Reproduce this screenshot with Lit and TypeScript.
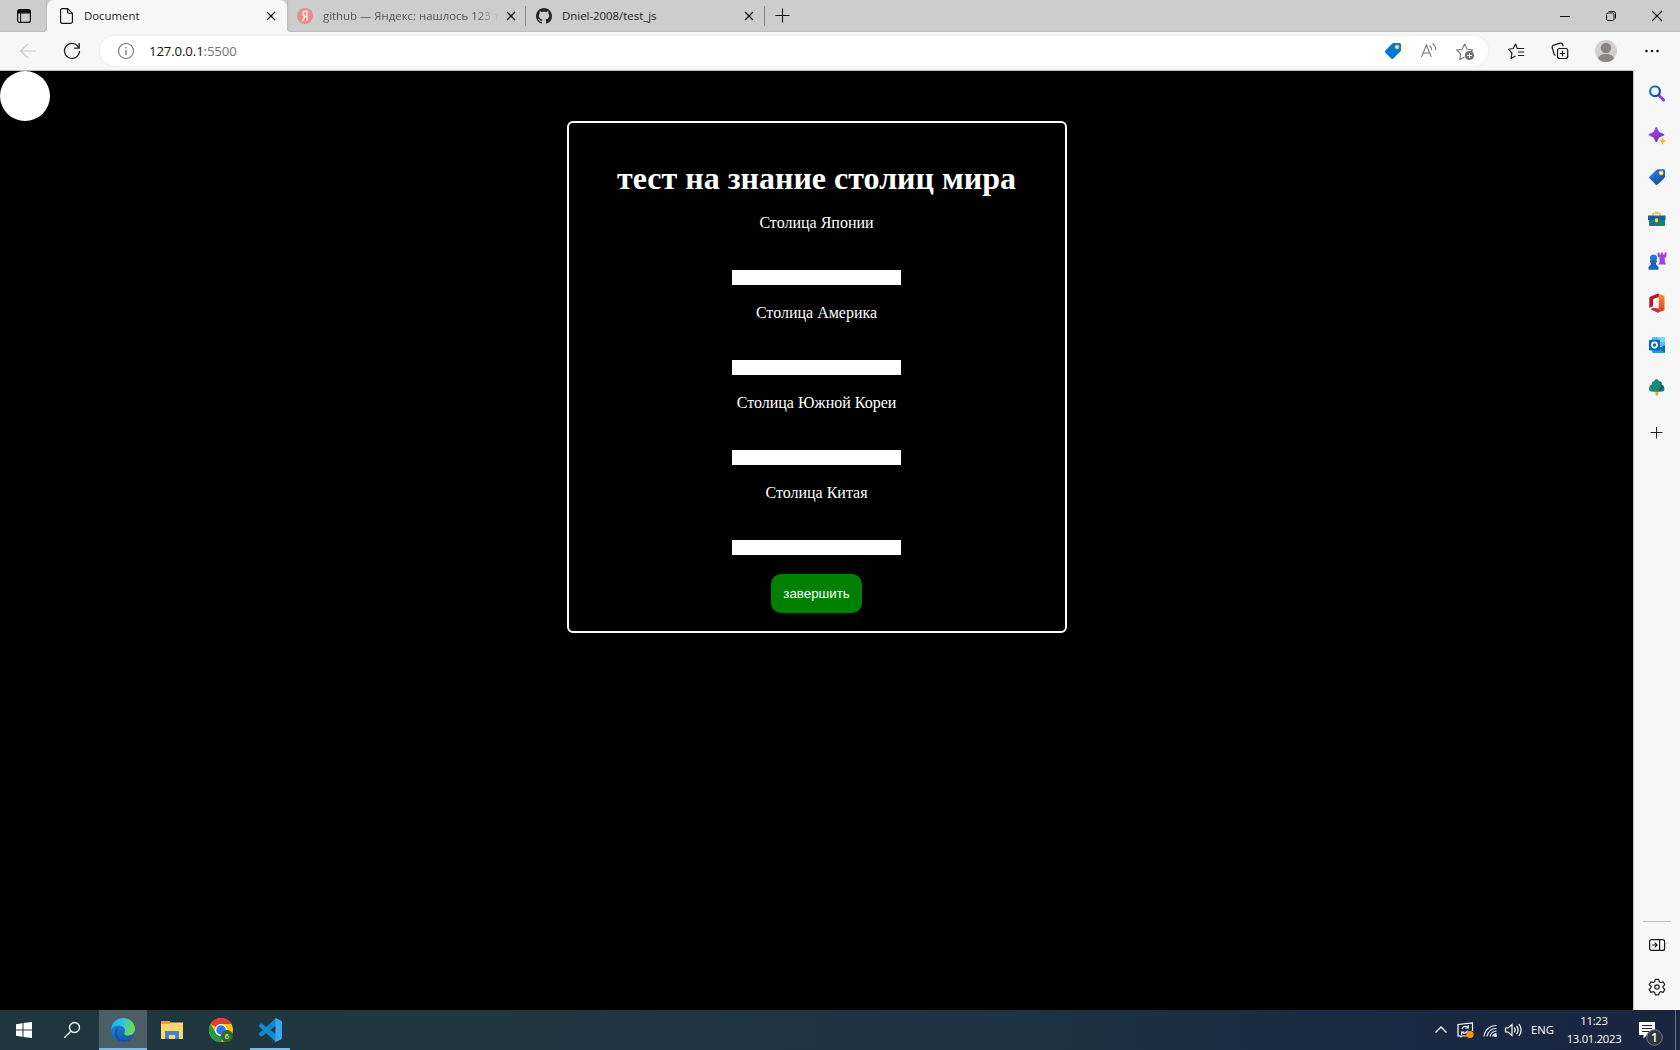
import { LitElement, html, css } from "lit";
import { customElement } from "lit/decorators.js";

const closeIcon = html`<svg width="24" height="24" viewBox="0 0 24 24"><path d="M8 8l8 8M16 8l-8 8" stroke="#111" stroke-width="1.3" fill="none"/></svg>`;

const github = html`<svg width="16" height="16" viewBox="0 0 16 16"><path fill="#24292e" fill-rule="evenodd" d="M8 0C3.58 0 0 3.58 0 8c0 3.54 2.29 6.53 5.47 7.59.4.07.55-.17.55-.38 0-.19-.01-.82-.01-1.49-2.01.37-2.53-.49-2.69-.94-.09-.23-.48-.94-.82-1.13-.28-.15-.68-.52-.01-.53.63-.01 1.08.58 1.23.82.72 1.21 1.87.87 2.33.66.07-.52.28-.87.51-1.07-1.78-.2-3.64-.89-3.64-3.95 0-.87.31-1.59.82-2.15-.08-.2-.36-1.02.08-2.12 0 0 .67-.21 2.2.82.64-.18 1.32-.27 2-.27s1.36.09 2 .27c1.53-1.04 2.2-.82 2.2-.82.44 1.1.16 1.92.08 2.12.51.56.82 1.27.82 2.15 0 3.07-1.87 3.75-3.65 3.95.29.25.54.73.54 1.48 0 1.07-.01 1.93-.01 2.2 0 .21.15.46.55.38A8.01 8.01 0 0 0 16 8c0-4.42-3.58-8-8-8z"/></svg>`;

@customElement("tab-strip")
class TabStrip extends LitElement {
  static styles = css`
    :host { display: flex; height: 32px; background: #f7f7f7; font: 11.4px/32px "Open Sans", "Noto Sans", sans-serif; color: #1b1b1b; }
    svg { display: block; flex: none; }
    .menu { width: 47px; box-sizing: border-box; padding: 9px 0 0 17px; background: #cdcdcd; border-bottom-right-radius: 4px; box-shadow: inset -1px -1px 1px #bcbcbc; }
    .edge { background: #cdcdcd; display: flex; }
    .tab { display: flex; align-items: center; box-sizing: border-box; }
    .active { width: 240px; height: 32px; padding: 0 4px 0 13px; background: #f7f7f7; border-radius: 7px 7px 0 0; }
    .rest { flex: 1; display: flex; background: #cdcdcd; border-bottom-left-radius: 4px; box-shadow: inset 1px -1px 1px #bcbcbc; }
    .second, .third { width: 238px; padding: 0 3px 0 10px; }
    .label { flex: 1; white-space: nowrap; overflow: hidden; margin: -1px 0 0 10px; }
    .active .label { margin-left: 11px; }
    .second .label { flex: none; width: 176px; color: #555; mask-image: linear-gradient(90deg, #000 88%, transparent 100%); }
    .second .x { margin-left: auto; }
    .sep { height: 20px; width: 1px; background: #858585; align-self: center; flex: none; }
    .add { margin: 4px 0 0 6px; }
    .controls { margin-left: auto; display: flex; }
    .controls svg { width: 46px; height: 32px; }
  `;
  render() {
    return html`
      <div class="menu"><svg width="14" height="14" viewBox="0 0 14 14"><rect x=".6" y=".6" width="12.8" height="12.8" rx="2" fill="none" stroke="#111" stroke-width="1.2"/><path d="M.6 4.4V2.6a2 2 0 0 1 2-2h8.8a2 2 0 0 1 2 2v1.8z" fill="#111"/><path d="M3.6 4v9.4" stroke="#111"/></svg></div>
      <div class="edge"><div class="tab active">
        <svg width="13" height="16" viewBox="0 0 13 16"><path d="M2.2.6h5.3L12.4 5.2v8.6a1.6 1.6 0 0 1-1.6 1.6H2.2A1.6 1.6 0 0 1 .6 13.8V2.2A1.6 1.6 0 0 1 2.2.6zM7.5.8v3.2a1.2 1.2 0 0 0 1.2 1.2h3.4" fill="none" stroke="#111" stroke-width="1.15"/></svg>
        <span class="label">Document</span>${closeIcon}
      </div></div>
      <div class="rest">
        <div class="tab second">
          <svg width="16" height="16" viewBox="0 0 16 16"><circle cx="8" cy="8" r="8" fill="#e59084"/><path d="M10 13V3.2H8.7C7 3.2 6 4.200 6 5.600 6 7.200 7 8.200 8.500 8.200H10M7.900 8.300L5.500 13" fill="none" stroke="#f4e6e4" stroke-width="1.6"/></svg>
          <span class="label">github — Яндекс: нашлось 123 т</span><span class="x">${closeIcon}</span>
        </div>
        <span class="sep"></span>
        <div class="tab third">${github}<span class="label">Dniel-2008/test_js</span>${closeIcon}</div>
        <span class="sep"></span>
        <svg class="add" width="24" height="24" viewBox="0 0 24 24"><path d="M11.500 4.500v14M4.500 11.500h14" stroke="#111" stroke-width="1.100"/></svg>
        <div class="controls">
          <svg viewBox="0 0 46 32"><path d="M18 16.500h10" stroke="#111"/></svg>
          <svg viewBox="0 0 46 32" fill="none" stroke="#111"><rect x="18.500" y="13" width="7.500" height="7.500" rx="1.500"/><path d="M20.500 11.500h5a2 2 0 0 1 2 2v5"/></svg>
          <svg viewBox="0 0 46 32"><path d="M18 11l10 10M28 11l-10 10" stroke="#111" stroke-width="1.100"/></svg>
        </div>
      </div>`;
  }
}

@customElement("address-bar")
class AddressBar extends LitElement {
  static styles = css`
    :host { display: flex; align-items: center; height: 38px; box-sizing: border-box; padding-right: 6px; background: #f7f7f7; font: 13.2px/30px "Open Sans", "Noto Sans", sans-serif; }
    svg { display: block; flex: none; }
    .back { margin-left: 16px; }
    .reload { margin-left: 20px; }
    .pill { flex: 1; height: 30px; display: flex; align-items: center; box-sizing: border-box; margin: 0 6px 0 16px; padding: 0 5px 0 14px; border-radius: 15px; background: #fff; box-shadow: 0 0 3px #e6e6e6; }
    .url { flex: 1; margin: -1px 0 0 11px; color: #111; letter-spacing: -.12px; }
    .port { color: #757575; }
    .i36 { width: 36px; height: 24px; }
    .i44 { width: 44px; height: 24px; }
    .i48 { width: 48px; height: 24px; }
  `;
  render() {
    return html`
      <svg class="back" width="24" height="24" viewBox="0 0 24 24"><path d="M20 12H4.500M12 5l-7.300 7L12 19" fill="none" stroke="#cacaca" stroke-width="1.200"/></svg>
      <svg class="reload" width="24" height="24" viewBox="0 0 24 24"><path d="M19 9.200A7.500 7.500 0 1 0 19.500 12M19.200 4v5.200H14" fill="none" stroke="#222" stroke-width="1.300"/></svg>
      <div class="pill">
        <svg width="24" height="24" viewBox="0 0 24 24"><circle cx="12" cy="12" r="7.500" fill="none" stroke="#767676" stroke-width="1.100"/><path d="M12 11v5M12 8v1.500" stroke="#767676" stroke-width="1.300"/></svg>
        <span class="url">127.0.0.1<span class="port">:5500</span></span>
        <svg class="i36" viewBox="0 0 36 24"><path d="M10.400 11.600l7-7a2 2 0 0 1 1.400-.6H24.500a1.500 1.500 0 0 1 1.500 1.500v5.600a2 2 0 0 1-.6 1.400l-7 7a1.500 1.500 0 0 1-2.100 0l-5.900-5.800a1.500 1.500 0 0 1 0-2.100z" fill="#0078d4"/><circle cx="22" cy="8" r="2" fill="#ffe680" stroke="#eab52f" stroke-width=".7"/></svg>
        <svg class="i36" viewBox="0 0 36 24" fill="none" stroke="#777" stroke-width="1.100"><path d="M10.500 18L15.400 6l4.900 12M12.200 14h6.400M18.600 6.500q2.200 1.800 2.200 4.800M21.600 4.300q3.200 2.700 3.200 6.700"/></svg>
        <svg class="i36" viewBox="0 0 36 24"><path d="M17.500 18.100l-4.700 2.300.9-5.500-4-3.900 5.400-.8L17.700 5l2.500 5.200 5.500.8-2.500 2.300" fill="none" stroke="#777" stroke-width="1.100" stroke-linejoin="round"/><circle cx="22.500" cy="16.500" r="4.600" fill="#707070"/><path d="M22.500 14v5M20 16.500h5" stroke="#fff"/></svg>
      </div>
      <svg class="i44" viewBox="0 0 44 24" fill="none" stroke="#1b1b1b" stroke-width="1.150"><path d="M27 9.500h-3.700L21.600 5l-2.500 4.500-4.600.8 3.400 3.700-.8 5.400 4.400-2.300M24 13h6.200M24 9.500h6.200M24 16.500h6.200" stroke-linejoin="round"/></svg>
      <svg class="i44" viewBox="0 0 44 24" fill="none" stroke="#1b1b1b" stroke-width="1.200"><rect x="19.500" y="9.500" width="10.200" height="10" rx="2"/><path d="M24.500 11.800v5.500M21.800 14.500h5.500M17.500 16.500l-1.200-1L14.200 8.500a2 2 0 0 1 1.400-2.300l6.700-2a2 2 0 0 1 2.400 1.300l.6 1.700"/></svg>
      <svg class="i48" viewBox="0 0 48 24"><clipPath id="av"><circle cx="24" cy="12" r="11"/></clipPath><circle cx="24" cy="12" r="11" fill="#d2d0ce"/><g clip-path="url(#av)" fill="#8a8583"><circle cx="24" cy="9" r="5.200"/><ellipse cx="24" cy="20" rx="8" ry="5"/></g></svg>
      <svg class="i44" viewBox="0 0 44 24" fill="#1b1b1b"><circle cx="16.500" cy="12" r="1.300"/><circle cx="22" cy="12" r="1.300"/><circle cx="27.500" cy="12" r="1.300"/></svg>`;
  }
}

@customElement("edge-sidebar")
class EdgeSidebar extends LitElement {
  static styles = css`
    :host { display: flex; flex-direction: column; align-items: center; box-sizing: border-box; width: 47px; background: #f7f7f7; border-left: 1px solid #bebebe; padding-top: 2px; }
    svg { display: block; width: 24px; height: 42px; flex: none; }
    .add { margin-top: 4px; }
    .line { width: 28px; height: 1px; background: #bdbdbd; margin: auto 0 2px; }
    .last { margin-bottom: 2px; }
  `;
  render() {
    return html`
      <svg viewBox="0 0 24 42"><defs><linearGradient id="s" x2="1" y2="1"><stop stop-color="#2588df"/><stop offset="1" stop-color="#173d9b"/></linearGradient></defs><path d="M14.500 24l4.200 4" stroke="#8a43dc" stroke-width="3" stroke-linecap="round"/><circle cx="10" cy="19.300" r="4.900" fill="#eef8ff" stroke="url(#s)" stroke-width="2.200"/></svg>
      <svg viewBox="0 0 24 42"><defs><linearGradient id="p" x2="1" y2="1"><stop stop-color="#b155f6"/><stop offset="1" stop-color="#5b22bf"/></linearGradient></defs><path d="M11.300 13q1 0 1.500 2.500.8 3 4.200 3.800 2.400.6 2.400 1.500t-2.400 1.500q-3.400.8-4.200 3.700-.5 2.300-1.500 2.300t-1.500-2.300q-.8-2.900-4.200-3.700-2-.6-2-1.500t2-1.500q3.400-.8 4.200-3.800.5-2.500 1.500-2.500z" fill="url(#p)"/><path d="M17.500 23l1.100 2.900 2.900 1.100-2.900 1.100-1.100 2.900-1.100-2.900L13.500 27l2.900-1.100z" fill="#f5b321"/></svg>
      <svg viewBox="0 0 24 42"><defs><linearGradient id="t" x2="1" y2="1"><stop stop-color="#2590db"/><stop offset="1" stop-color="#143f9d"/></linearGradient></defs><path d="M4.600 20.500l6.500-6.300q1-.9 2.300-.9h5.200a1.400 1.400 0 0 1 1.400 1.400v5.400q0 1.300-.9 2.200l-6.500 6.300q-1 .8-2 0l-6-6q-1-1 0-2.100z" fill="url(#t)"/><circle cx="16.200" cy="17" r="1.800" fill="#fff" stroke="#f4c530" stroke-width="1.200"/></svg>
      <svg viewBox="0 0 24 42"><defs><linearGradient id="b" x2="1" y2="1"><stop stop-color="#16879f"/><stop offset=".5" stop-color="#117598"/><stop offset="1" stop-color="#169447"/></linearGradient></defs><path d="M8 18.500v-2.300a1.200 1.200 0 0 1 1.200-1.200h4.600a1.200 1.200 0 0 1 1.200 1.200v2.300" fill="none" stroke="#efb72b" stroke-width="1.400"/><rect x="4" y="18" width="16" height="10" rx="1" fill="url(#b)"/><path d="M3 17.500h17.500v4.500h-17.500z" fill="#155f91"/><rect x="10" y="20.300" width="3" height="4" rx="1" fill="#ffd044"/></svg>
      <svg viewBox="0 0 24 42"><path d="M12.500 12.500h2v2h1.500v-2h2v2h1.500v-2h2v4l-1.700 1.500v4l1.500 2.500h-8l1.200-2.500v-4L12.500 16z" fill="#9c45e8"/><circle cx="8.500" cy="18" r="3.500" fill="#1d7bd2"/><path d="M5 20.500h7v2h-1.200q0 3 2.700 4.500v2.700h-10V27q2.700-1.500 2.700-4.500H5z" fill="#1763bd"/></svg>
      <svg viewBox="0 0 24 42"><defs><linearGradient id="o" y2="1" x2="0"><stop stop-color="#f79a38"/><stop offset="1" stop-color="#d4391b"/></linearGradient></defs><path d="M13 11.500l6.500 2.200v14.600L13 30.500l-6.500-3.500 7.200.8V15z" fill="url(#o)"/><path d="M13 11.500l-7.500 3q-1.200.5-1.200 2v9.400l3.700-2v-5.700q0-1 1-1.400l4.800-1.800V12z" fill="#b4182c"/><path d="M5.500 27.200l2.600-1.500 5.900.8v3.800q-1.300.5-2.300 0z" fill="#c53144"/></svg>
      <svg viewBox="0 0 24 42"><path d="M7 13h13v9H7z" fill="#55c4f5"/><path d="M13 13h7v5h-7z" fill="#7cdaff"/><path d="M7 21l6.500 3.500L20 21v8H8.500A1.500 1.500 0 0 1 7 27.500z" fill="#229ce4"/><path d="M20 21v7.500L13 24.500z" fill="#116caf"/><rect x="4" y="15.700" width="11" height="10.700" rx="1.200" fill="#0869bd"/><circle cx="9.500" cy="21" r="2.600" fill="none" stroke="#fff" stroke-width="1.600"/></svg>
      <svg viewBox="0 0 24 42"><path d="M10.300 25h3v4q-1.500 1.500-3 0z" fill="#f0ad24"/><path d="M11.500 13q1.500 0 2.600 2.100 3.100.7 2.700 3.500 2.500 1 2.500 3.300 1 3.800-4 3.800H8.200q-4.800 0-4.100-3.800 0-2.300 2.600-3.300-.2-3 2.500-3.500.900-2.100 2.300-2.100z" fill="#168979"/><path d="M14.500 15.500q2.400.6 1.900 3.200 2.300 1 2.300 3 .2 3.200-5 3.200 3.500-3.500.8-9.400z" fill="#17625c"/></svg>
      <svg class="add" viewBox="0 0 24 42"><path d="M11.500 15v11.500M5.700 20.500h11.800" stroke="#222"/></svg>
      <div class="line"></div>
      <svg viewBox="0 0 24 42" fill="none" stroke="#161616" stroke-width="1.200"><rect x="4.600" y="15.600" width="15" height="10.800" rx="2"/><path d="M14.600 15.600v10.800M7 21h5M9.800 18.700l2.300 2.300-2.300 2.300"/></svg>
      <svg class="last" viewBox="0 0 24 42" fill="none" stroke="#202020" stroke-width="1.200"><path d="M10.300 13.300h3.400l.6 2.400 1.400.8 2.400-.7 1.700 2.900-1.800 1.700v1.400l1.800 1.700-1.700 2.900-2.400-.7-1.400.8-.6 2.400h-3.400l-.6-2.400-1.400-.8-2.400.7-1.700-2.900L6 21.800v-1.400l-1.800-1.700 1.700-2.900 2.400.7 1.400-.8z" stroke-linejoin="round"/><circle cx="12" cy="21" r="2.200"/></svg>`;
  }
}

@customElement("quiz-page")
class QuizPage extends LitElement {
  static styles = css`
    :host { display: block; flex: 1; background: #000; color: #fff; font: 16px/18px "Liberation Serif", serif; }
    .ball { width: 50px; height: 50px; border-radius: 50%; background: #fff; }
    .card { display: flex; flex-direction: column; align-items: center; box-sizing: border-box; width: 500px; height: 512px; margin: 0 0 0 567px; border: 2px solid #fff; border-radius: 6px; padding: 37px 1px 0 0; }
    h1 { margin: 0 0 17px; font-size: 32px; line-height: 37px; white-space: nowrap; }
    label { height: 18px; margin-bottom: 38px; }
    input { display: block; box-sizing: border-box; width: 169px; height: 15px; margin: 0 0 19px; padding: 0; border: 0; background: #fff; }
    button { width: 91px; height: 39px; padding: 0; border: 0; border-radius: 10px; background: #008000; color: #fff; font: 13.333px "Liberation Sans", Arial, sans-serif; }
  `;
  private questions = ["Столица Японии", "Столица Америка", "Столица Южной Кореи", "Столица Китая"];
  render() {
    return html`
      <div class="ball"></div>
      <div class="card">
        <h1>тест на знание столиц мира</h1>
        ${this.questions.map((q, i) => html`<label for="q${i}">${q}</label><input id="q${i}">`)}
        <button>завершить</button>
      </div>`;
  }
}

@customElement("task-bar")
class TaskBar extends LitElement {
  static styles = css`
    :host { display: flex; height: 40px; background: linear-gradient(90deg, #20363f 0, #21373f 28%, #1e3242 60%, #1a2742 85%, #1a2640 100%); color: #fff; font: 11.3px/18px "Open Sans", "Noto Sans", sans-serif; }
    svg { display: block; height: 40px; flex: none; }
    .slot { width: 48px; }
    .slot svg { width: 48px; }
    .edge { margin-left: 3px; background: #4c5e66; box-shadow: inset 0 -2px #76b9ed; }
    .files { width: 49px; margin-left: 1px; }
    .code { width: 40px; box-shadow: inset 0 -2px #76b9ed; }
    .chrome { width: 53px; }
    .tray { margin-left: auto; display: flex; align-items: center; }
    .tray svg { width: 24px; }
    .lang { width: 28px; margin: -1px 0 0 6px; }
    .clock { width: 70px; text-align: center; margin-top: -1px; white-space: nowrap; letter-spacing: -.3px; }
    .tray .note { width: 46px; }
    .show { width: 4px; height: 40px; border-left: 1px solid #69748a; }
  `;
  render() {
    return html`
      <div class="slot"><svg viewBox="0 0 48 40"><path d="M16 14.300l6.500-1v6.200H16zM23.500 13.100L32 12v7.500h-8.500zM16 20.500h6.500v6.200l-6.500-1zM23.500 20.500H32V28l-8.500-1.100z" fill="#fff"/></svg></div>
      <div class="slot"><svg viewBox="0 0 48 40" fill="none" stroke="#fff" stroke-width="1.300"><circle cx="26.500" cy="17.500" r="5"/><path d="M23 21.200l-6.700 6.600"/></svg></div>
      <div class="slot edge"><svg viewBox="0 0 48 40"><defs><linearGradient id="e1" x2="1" y2=".3"><stop stop-color="#23a8df"/><stop offset=".5" stop-color="#31c3dc"/><stop offset="1" stop-color="#68db5a"/></linearGradient><linearGradient id="e2" x2=".6" y2="1"><stop stop-color="#1591df"/><stop offset="1" stop-color="#115ab4"/></linearGradient></defs><circle cx="24" cy="20" r="12" fill="url(#e2)"/><path d="M12 19.500C12.800 12.500 18 8 24 8c7 0 12 5 12 10.800 0 4.100-3 6.700-6.700 6.700-3 0-4.800-1.100-3.900-2.600 2-3.300-1-7.400-5.400-7.400-3.600 0-6.500 1.600-8 4z" fill="url(#e1)"/><path d="M20.500 17.500c-2.500 2-3.500 5.500-1.700 8.500 2.700 4.500 9.500 5.400 14.700 1.300-2 2.800-5.400 4.700-9.500 4.700-6-1.500-9.500-7-7.300-11.800.8-1.700 2.200-2.600 3.800-2.700z" fill="#164f9d"/><path d="M24 20c-1.300 3.400 1.900 6.800 6.400 6.500 2-.1 3.500-.8 4.800-1.900l-.6 1.200c-4.300 2.200-9.600 1.200-11.200-2-.7-1.400-.2-2.800.6-3.800z" fill="#4c5e66"/></svg></div>
      <div class="slot files"><svg viewBox="0 0 48 40"><path d="M13 11h8l2 2h-10z" fill="#e5a10c"/><path d="M13 12.500h22V29H13z" fill="#ffd56d"/><path d="M13 11h9v3h-9z" fill="#e6a519"/><path d="M17 29v-8h14v8h-4v-4h-6v4z" fill="#398bd0"/></svg></div>
      <div class="slot chrome"><svg viewBox="0 0 48 40"><circle cx="24" cy="20" r="12" fill="#fbc116"/><path d="M13.600 14A12 12 0 0 1 34.400 14H24a6 6 0 0 0-5.200 3z" fill="#e33b2e"/><path d="M13.600 14A12 12 0 0 0 24 32l5.200-9a6 6 0 0 1-10.400 0z" fill="#249a49"/><circle cx="24" cy="20" r="6" fill="#fff"/><circle cx="24" cy="20" r="4.700" fill="#2e75e8"/><circle cx="30" cy="26" r="6" fill="#326b22"/><text x="30" y="29" text-anchor="middle" font-family="Open Sans" font-size="7.500" fill="#fff">6</text></svg></div>
      <div class="code"><svg width="40" viewBox="0 0 40 40"><path d="M26 8L9.200 23.200q-1 .9 0 1.800l1.400 1.200q.8.600 1.600 0L27 15z" fill="#1682cb"/><path d="M26 32L9.200 16.800q-1-.9 0-1.800l1.400-1.200q.8-.6 1.600 0L27 25z" fill="#1689d2"/><path d="M26 8.300L31 10.600q1 .5 1 1.600v15.600q0 1.100-1 1.600L26 31.800q-1 .3-1.700-.4.900.2 1.100-1V9.700q-.3-1.100-1.100-1 .7-.7 1.700-.4z" fill="#35a7ee"/></svg></div>
      <div class="tray">
        <svg viewBox="0 0 24 40"><path d="M6.500 22.500l5.500-5.500 5.500 5.500" fill="none" stroke="#fff" stroke-width="1.400"/></svg>
        <svg viewBox="0 0 24 40"><path d="M14 26H5V14.500L19.500 13v8M8 26v1.500" fill="none" stroke="#fff" stroke-width="1.200"/><path d="M9 19a3.500 3.500 0 0 1 6-1.500M15.300 15v3h-3M14.500 20.500a3.500 3.500 0 0 1-5.500 2M8.500 25v-3h3" fill="none" stroke="#fff" stroke-width="1.100"/><circle cx="17" cy="24.500" r="3.600" fill="#ff9800"/></svg>
        <svg viewBox="0 0 24 40" fill="none" stroke="#e8ecf2" stroke-width="1.200"><path d="M7 26.500A12 12 0 0 1 19.500 15.500M10 26.500A9 9 0 0 1 19.500 18.500M13 26.500a7 7 0 0 1 6.500-5.500M15.500 26.500a4.500 4.500 0 0 1 4-3"/><circle cx="18.500" cy="25.500" r="1" fill="#fff"/></svg>
        <svg viewBox="0 0 24 40" fill="none" stroke="#fff" stroke-width="1.200"><path d="M4.500 18h2.500L11 14.500v11L7 22H4.500zM13.300 17.500q1.700 2.500 0 5M15.600 15.800q3 4.200 0 8.400M18 14q4.200 6 0 12"/></svg>
        <span class="lang">ENG</span>
        <div class="clock">11:23<br>13.01.2023</div>
        <svg class="note" viewBox="0 0 46 40"><path d="M10 12h16v13h-8l-3.500 3.500V25H10z" fill="#fff"/><path d="M13 15.500h10M13 18.500h10M13 21.500h7" stroke="#1a2640"/><circle cx="25.500" cy="27.500" r="7.800" fill="#303640" stroke="#747b86"/><text x="25.500" y="31.800" text-anchor="middle" font-family="Open Sans" font-size="12" font-weight="600" fill="#fff">1</text></svg>
        <div class="show"></div>
      </div>`;
  }
}

@customElement("app-root")
class AppRoot extends LitElement {
  static styles = css`
    :host { display: flex; flex-direction: column; width: 1680px; height: 1050px; overflow: hidden; }
    .body { flex: 1; display: flex; min-height: 0; }
    .view { flex: 1; display: flex; border-top: 1px solid #b9bcb9; }
  `;
  render() {
    return html`<tab-strip></tab-strip><address-bar></address-bar>
      <div class="body"><div class="view"><quiz-page></quiz-page></div><edge-sidebar></edge-sidebar></div>
      <task-bar></task-bar>`;
  }
}
